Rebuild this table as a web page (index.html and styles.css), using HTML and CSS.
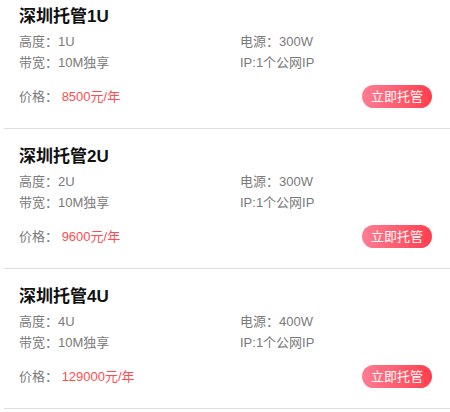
FILE: index.html
```html
<!DOCTYPE html>
<html lang="zh-CN">
<head>
<meta charset="utf-8">
<title>托管列表</title>
<link rel="stylesheet" href="styles.css">
</head>
<body>
<div class="list">
  <div class="card">
    <h2 class="title">深圳托管1U</h2>
    <div class="specs">
      <div class="spec">高度：1U</div>
      <div class="spec">电源：300W</div>
      <div class="spec">带宽：10M独享</div>
      <div class="spec">IP:1个公网IP</div>
    </div>
    <div class="foot">
      <div class="price">价格： <span class="num">8500元/年</span></div>
      <a class="btn">立即托管</a>
    </div>
  </div>
  <div class="card">
    <h2 class="title">深圳托管2U</h2>
    <div class="specs">
      <div class="spec">高度：2U</div>
      <div class="spec">电源：300W</div>
      <div class="spec">带宽：10M独享</div>
      <div class="spec">IP:1个公网IP</div>
    </div>
    <div class="foot">
      <div class="price">价格： <span class="num">9600元/年</span></div>
      <a class="btn">立即托管</a>
    </div>
  </div>
  <div class="card">
    <h2 class="title">深圳托管4U</h2>
    <div class="specs">
      <div class="spec">高度：4U</div>
      <div class="spec">电源：400W</div>
      <div class="spec">带宽：10M独享</div>
      <div class="spec">IP:1个公网IP</div>
    </div>
    <div class="foot">
      <div class="price">价格： <span class="num">129000元/年</span></div>
      <a class="btn">立即托管</a>
    </div>
  </div>
</div>
</body>
</html>
```
FILE: styles.css
```css
html, body {
  margin: 0;
  padding: 0;
  background: #fff;
  overflow: hidden;
}
body {
  font-family: "Liberation Sans", "Noto Sans CJK SC", Arial, sans-serif;
  font-size: 13px;
  color: #7a7a7a;
}
.list {
  margin-top: -11px;
  margin-left: 4px;
}
.card {
  box-sizing: border-box;
  height: 140px;
  padding: 15px 18px 0 15px;
  border-bottom: 1px solid #dedede;
}
.title {
  margin: 0;
  font-size: 17px;
  font-weight: bold;
  line-height: 25px;
  height: 25px;
  color: #111;
}
.specs {
  margin-top: 2px;
  display: grid;
  grid-template-columns: 221px 1fr;
  grid-auto-rows: 21px;
  line-height: 21px;
}
.foot {
  margin-top: 12px;
  display: flex;
  align-items: center;
  justify-content: space-between;
  height: 23px;
}
.price {
  line-height: 23px;
}
.num {
  color: #ff4d4f;
}
.btn {
  display: inline-block;
  height: 23px;
  line-height: 23px;
  padding: 0 9px;
  border-radius: 12px;
  color: #fff;
  background: linear-gradient(90deg, #ff7d93, #ff3f4d);
  font-size: 13px;
}
```
